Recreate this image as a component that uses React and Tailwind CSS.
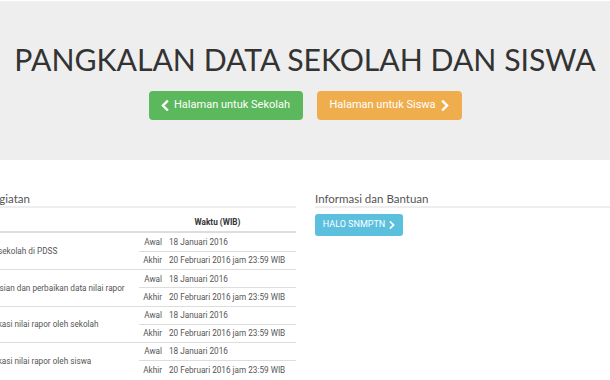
import React from "react";

function Chevron({ dir = "right", className = "" }) {
  const d = dir === "right" ? "M2 1.5 L6.5 6 L2 10.5" : "M6.5 1.5 L2 6 L6.5 10.5";
  return (
    <svg viewBox="0 0 8.5 12" className={className} fill="none">
      <path d={d} stroke="currentColor" strokeWidth="2.6" strokeLinecap="square" />
    </svg>
  );
}

const rows = [
  "Data sekolah di PDSS",
  "Pengisian dan perbaikan data nilai rapor",
  "Verifikasi nilai rapor oleh sekolah",
  "Verifikasi nilai rapor oleh siswa",
];

export default function App() {
  return (
    <div className="w-[610px] h-[380px] overflow-hidden bg-white font-['Roboto',sans-serif]">
      {/* jumbotron */}
      <div className="mt-[1px] h-[159px] bg-[#eeeeee] flex flex-col items-center pt-[39px]">
        <h1 className="font-['Lato',sans-serif] text-[30.2px] leading-[38px] text-[#333333] whitespace-nowrap">
          PANGKALAN DATA SEKOLAH DAN SISWA
        </h1>
        <div className="mt-[13px] flex gap-[14px]">
          <button className="h-[29px] w-[154px] rounded-[4px] bg-[#5cb85c] text-white text-[11px] flex items-center justify-center gap-[5px]">
            <Chevron dir="left" className="w-[8px] h-[11px]" />
            Halaman untuk Sekolah
          </button>
          <button className="h-[29px] w-[145px] rounded-[4px] bg-[#f0ad4e] text-white text-[11px] flex items-center justify-center gap-[5px]">
            Halaman untuk Siswa
            <Chevron dir="right" className="w-[8px] h-[11px]" />
          </button>
        </div>
      </div>

      {/* content */}
      <div className="flex gap-[19px] pt-[32px]">
        <div className="-ml-[21px] w-[317px] shrink-0">
          <h3 className="font-['Lato',sans-serif] text-[11.5px] leading-[14px] text-[#555555] pl-[7px] border-b-2 border-[#eeeeee]">
            Kegiatan
          </h3>
          <div className="text-[8.2px] leading-[10px] text-[#555555]">
            <div className="h-[25px] flex border-b-2 border-[#dddddd]">
              <div className="w-[160px] shrink-0" />
              <div className="flex-1 flex items-end justify-center font-bold text-[#333333] pb-[4px]">
                Waktu (WIB)
              </div>
            </div>
            {rows.map((r, i) => (
              <div key={i} className={`flex h-[36.3px] ${i > 0 ? "border-t border-[#dddddd]" : ""}`}>
                <div className="w-[160px] shrink-0 flex items-center whitespace-nowrap overflow-hidden">{r}</div>
                <div className="flex-1 min-w-0 flex flex-col">
                  <div className="flex-1 flex items-center">
                    <div className="w-[23px] shrink-0 text-right">Awal</div>
                    <div className="pl-[7px] whitespace-nowrap">18 Januari 2016</div>
                  </div>
                  <div className="flex-1 flex items-center border-t border-[#dddddd]">
                    <div className="w-[23px] shrink-0 text-right">Akhir</div>
                    <div className="pl-[7px] whitespace-nowrap">20 Februari 2016 jam 23:59 WIB</div>
                  </div>
                </div>
              </div>
            ))}
          </div>
        </div>
        <div className="w-[317px] shrink-0">
          <h3 className="font-['Lato',sans-serif] text-[11.5px] leading-[14px] text-[#555555] border-b-2 border-[#eeeeee]">
            Informasi dan Bantuan
          </h3>
          <button className="mt-[6px] h-[22px] w-[88px] rounded-[3px] bg-[#5bc0de] text-white text-[9px] flex items-center justify-center gap-[4px]">
            HALO SNMPTN
            <Chevron dir="right" className="w-[6px] h-[8px]" />
          </button>
        </div>
      </div>
    </div>
  );
}
